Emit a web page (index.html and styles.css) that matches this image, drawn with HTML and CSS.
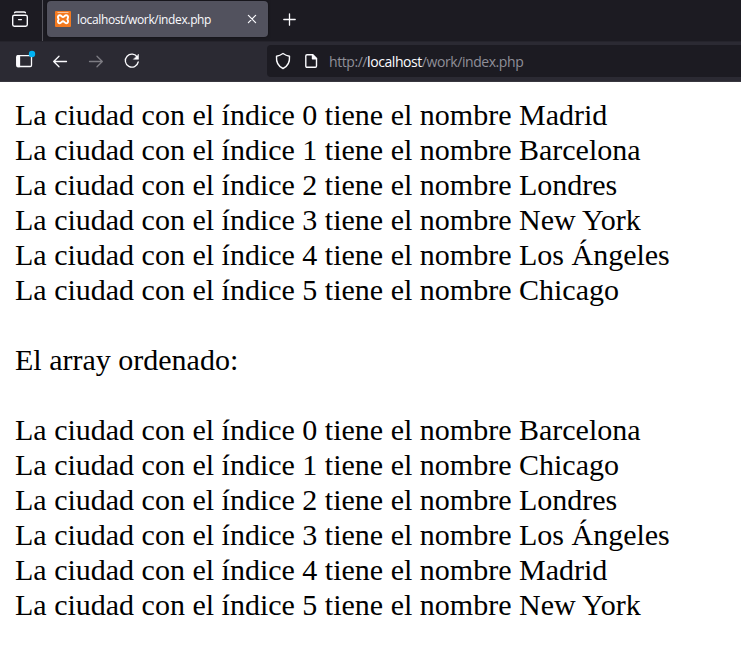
FILE: index.html
```html
<!DOCTYPE html>
<html lang="es">
<head>
<meta charset="utf-8">
<title>localhost/work/index.php</title>
<link rel="stylesheet" href="styles.css">
</head>
<body>
<div class="tabbar">
  <div class="view">
    <svg width="18" height="18" viewBox="0 0 18 18" fill="none" stroke="#fbfbfe" stroke-width="1.4" stroke-linecap="round"><path d="M3.6 1.7Q4 1 5 1h8q1 0 1.4.7"/><rect x="1.7" y="4.2" width="14.6" height="11" rx="1.6"/><path d="M7.6 8.6h2.8"/></svg>
  </div>
  <div class="tab">
    <svg class="favicon" width="16" height="16" viewBox="0 0 16 16"><rect width="16" height="16" rx="1" fill="#f47a20"/><path d="M2.500 1.500h11" stroke="#fbc39a" stroke-width="1"/><path d="M3.700 8.200C2.300 6.300 2.800 4.200 4.800 4.200c1.500 0 1.900 1.900 3.200 1.900s1.700-1.900 3.200-1.900c2 0 2.500 2.100 1.100 4 1.400 1.900.9 4-1.100 4-1.500 0-1.900-1.900-3.200-1.900s-1.700 1.900-3.200 1.900c-2 0-2.500-2.100-1.100-4z" fill="none" stroke="#fff" stroke-width="1.900" stroke-linejoin="round"/></svg>
    <span class="title">localhost/work/index.php</span>
    <svg class="close" width="10" height="10" viewBox="0 0 10 10" stroke="#fbfbfe" stroke-width="1.2" stroke-linecap="round"><path d="M1.400 1.400l7.200 7.200M8.600 1.400L1.400 8.600"/></svg>
  </div>
  <svg class="plus" width="13" height="13" viewBox="0 0 13 13" stroke="#fbfbfe" stroke-width="1.300" stroke-linecap="round"><path d="M6.500 .8v11.400M.8 6.500h11.400"/></svg>
</div>
<div class="navbar">
  <svg class="icons" width="150" height="39" viewBox="0 42 150 39" fill="none" stroke="#fbfbfe" stroke-width="1.300" stroke-linecap="round" stroke-linejoin="round">
    <rect x="16.700" y="55.700" width="14.800" height="10.800" rx="1.200"/><path d="M17.500 56h2v10.500h-2z" fill="#fbfbfe"/><circle cx="32" cy="54" r="3.200" fill="#00b3f4" stroke="none"/>
    <path d="M66.500 61.500H54M59 56.200l-5.300 5.300 5.300 5.300"/>
    <path d="M89.500 61.500H102M97 56.200l5.300 5.300-5.300 5.300" stroke="#7d7c83"/>
    <path d="M137.400 57.300A6.500 6.500 0 1 0 138.200 62"/><path d="M138.500 54.500v4.800h-4.800z" fill="#fbfbfe" stroke-width=".5"/>
  </svg>
  <div class="urlbar">
    <svg width="16" height="18" viewBox="0 0 16 18" fill="none" stroke="#fbfbfe" stroke-width="1.400" stroke-linejoin="round"><path d="M8 1.500Q11 3.600 14.500 4.300C14.900 9.800 12.800 14.400 8 16.500 3.200 14.400 1.100 9.800 1.500 4.300Q5 3.600 8 1.500z"/></svg>
    <svg class="page" width="13" height="16" viewBox="0 0 13 16" fill="none" stroke="#fbfbfe" stroke-width="1.400" stroke-linejoin="round"><path d="M2 1.700h5.700l3.800 3.800V13q0 1.200-1.200 1.200H2Q.8 14.200.8 13V2.900Q.8 1.700 2 1.700z"/><path d="M7.500 1.700v4h4z" fill="#fbfbfe"/></svg>
    <span class="url">http://<b>localhost</b>/work/index.php</span>
  </div>
</div>
<main>
La ciudad con el índice 0 tiene el nombre Madrid<br>
La ciudad con el índice 1 tiene el nombre Barcelona<br>
La ciudad con el índice 2 tiene el nombre Londres<br>
La ciudad con el índice 3 tiene el nombre New York<br>
La ciudad con el índice 4 tiene el nombre Los Ángeles<br>
La ciudad con el índice 5 tiene el nombre Chicago<br>
<br>
El array ordenado:<br>
<br>
La ciudad con el índice 0 tiene el nombre Barcelona<br>
La ciudad con el índice 1 tiene el nombre Chicago<br>
La ciudad con el índice 2 tiene el nombre Londres<br>
La ciudad con el índice 3 tiene el nombre Los Ángeles<br>
La ciudad con el índice 4 tiene el nombre Madrid<br>
La ciudad con el índice 5 tiene el nombre New York<br>
</main>
</body>
</html>
```
FILE: styles.css
```css
* { box-sizing: border-box; }
body { margin: 0; background: #fff; overflow: hidden; }
svg { display: block; flex: none; }
.tabbar { display: flex; height: 41px; background: #1c1b22; }
.view { width: 43px; padding: 11px 0 0 11px; border-right: 1px solid #55545c; }
.tab {
  display: flex;
  align-items: center;
  width: 221px;
  height: 36px;
  margin: 1px 0 0 4px;
  padding: 0 11px 0 8px;
  border-radius: 4px;
  background: #52525e;
  box-shadow: 0 0 3px rgba(0, 0, 0, .5);
}
.title {
  margin-left: 6px;
  padding-top: 2px;
  font: 12px/18px "Open Sans", sans-serif;
  letter-spacing: -0.36px;
  color: #fbfbfe;
  white-space: nowrap;
}
.close { margin-left: auto; }
.plus { margin: 13px 0 0 15px; }
.navbar {
  display: flex;
  height: 41px;
  background: #2b2a33;
  border-top: 1px solid #25242c;
  border-bottom: 1px solid #38373f;
}
.icons { margin-right: 117px; }
.urlbar {
  display: flex;
  flex: 1;
  align-items: center;
  height: 32px;
  margin-top: 3px;
  padding-left: 8px;
  border-radius: 4px 0 0 4px;
  background: #1c1b22;
}
.page { margin-left: 14px; }
.url {
  margin-left: 11px;
  padding-top: 2px;
  font: 14px/20px "Open Sans", sans-serif;
  letter-spacing: -0.43px;
  color: #8f8f98;
  white-space: nowrap;
}
.url b { font-weight: 400; color: #fbfbfe; }
main {
  padding: 15px;
  font: 30px/35px "Liberation Serif", serif;
  color: #000;
  white-space: nowrap;
}
```
